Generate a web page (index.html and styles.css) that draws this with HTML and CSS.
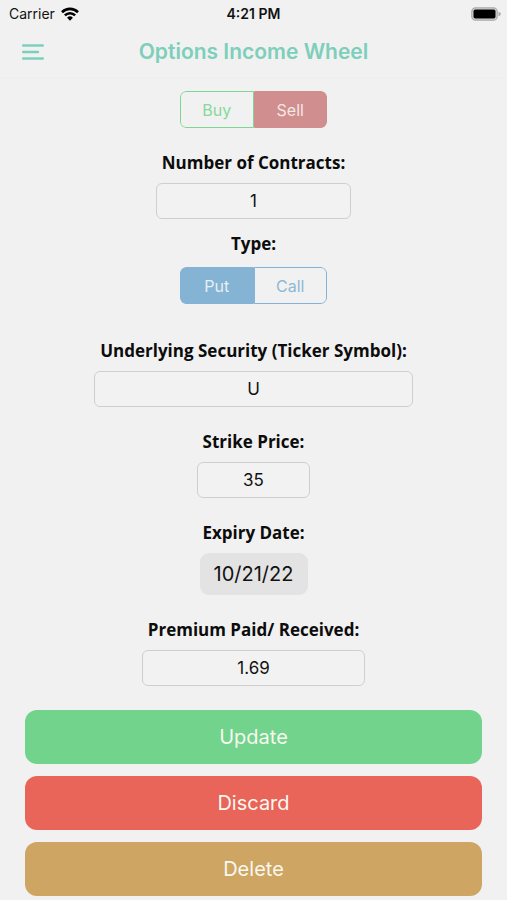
FILE: index.html
```html
<!DOCTYPE html>
<html lang="en">
<head>
<meta charset="utf-8">
<meta name="viewport" content="width=device-width, initial-scale=1">
<title>Options Income Wheel</title>
<link rel="stylesheet" href="styles.css">
</head>
<body>
<div class="status">
  <div class="carrier">
    <span>Carrier</span>
    <svg class="wifi" viewBox="0 0 18 14" aria-hidden="true">
      <g fill="none" stroke="#000" stroke-width="2.6">
        <path d="M1 5.2A11.4 11.4 0 0 1 17 5.2"/>
        <path d="M3.9 8.3A7.2 7.2 0 0 1 14.1 8.3"/>
      </g>
      <path d="M6.1 10.7A4.1 4.1 0 0 1 11.9 10.7L9 13.7Z"/>
    </svg>
  </div>
  <time class="clock">4:21 PM</time>
  <svg class="battery" viewBox="0 0 30 14" aria-hidden="true">
    <rect x=".8" y=".8" width="25.4" height="12.4" rx="3.8" fill="#d4d4d4" stroke="#aaa" stroke-width="1.2"/>
    <rect x="2.5" y="2.5" width="22" height="9" rx="1.8"/>
    <path d="M27.5 4.7Q30 5.4 30 7T27.5 9.3Z" fill="#aaa"/>
  </svg>
</div>
<header class="nav">
  <button class="menu" type="button" aria-label="Menu">
    <svg viewBox="0 0 22 16" aria-hidden="true">
      <path d="M1.2 1.5H20.8M1.2 8H16M1.2 14.5H20.8" fill="none" stroke="#7dcfbb" stroke-width="2.4" stroke-linecap="round"/>
    </svg>
  </button>
  <h1>Options Income Wheel</h1>
</header>
<form class="form">
  <div class="segment side">
    <button type="button" aria-pressed="false">Buy</button>
    <button type="button" aria-pressed="true">Sell</button>
  </div>
  <div class="field">
    <label for="contracts">Number of Contracts:</label>
    <input class="medium" id="contracts" type="text" value="1">
  </div>
  <div class="field type">
    <span class="caption" id="type">Type:</span>
    <div class="segment kind" role="group" aria-labelledby="type">
      <button type="button" aria-pressed="true">Put</button>
      <button type="button" aria-pressed="false">Call</button>
    </div>
  </div>
  <div class="field">
    <label for="ticker">Underlying Security (Ticker Symbol):</label>
    <input class="wide" id="ticker" type="text" value="U">
  </div>
  <div class="field">
    <label for="strike">Strike Price:</label>
    <input class="narrow" id="strike" type="text" value="35">
  </div>
  <div class="field">
    <label for="expiry">Expiry Date:</label>
    <button class="date" id="expiry" type="button">10/21/22</button>
  </div>
  <div class="field">
    <label for="premium">Premium Paid/ Received:</label>
    <input class="premium" id="premium" type="text" value="1.69">
  </div>
  <div class="actions">
    <button class="update" type="submit">Update</button>
    <button class="discard" type="button">Discard</button>
    <button class="delete" type="button">Delete</button>
  </div>
</form>
</body>
</html>
```
FILE: styles.css
```css
* {
  box-sizing: border-box;
}

body {
  margin: 0;
  background: #f1f1f1;
  color: #111;
  font-family: Inter, sans-serif;
}

button,
input {
  margin: 0;
  padding: 0;
  border: 0;
  font: inherit;
  color: inherit;
}

.status {
  display: grid;
  grid-template-columns: 1fr auto 1fr;
  align-items: center;
  height: 27px;
  padding: 0 6px;
  font-size: 14px;
}

.carrier {
  display: flex;
  align-items: center;
  gap: 6px;
  padding-left: 3px;
}

.wifi {
  width: 18px;
  height: 14px;
}

.clock {
  font-weight: 600;
}

.battery {
  justify-self: end;
  width: 30px;
  height: 14px;
}

.nav {
  display: grid;
  grid-template-columns: 44px 1fr 44px;
  align-items: center;
  height: 51px;
  padding: 0 11px;
  border-bottom: 1px solid #eee;
}

.menu {
  display: flex;
  align-items: center;
  justify-content: center;
  height: 44px;
  background: none;
}

.menu svg {
  width: 22px;
  height: 16px;
}

h1 {
  margin: 0;
  color: #7dcfbb;
  font-size: 21px;
  font-weight: 600;
  line-height: 28px;
  text-align: center;
}

.form {
  display: flex;
  flex-direction: column;
  align-items: center;
  gap: 23px;
  padding: 13px 25px 4px;
}

.segment {
  display: grid;
  grid-template-columns: 1fr 1fr;
  width: 147px;
  height: 37px;
  overflow: hidden;
  border-radius: 6px;
  font-size: 16px;
}

.segment button {
  border: 1px solid;
  background: none;
}

.segment button:first-child {
  border-radius: 6px 0 0 6px;
}

.segment button:last-child {
  border-radius: 0 6px 6px 0;
}

.side button {
  border-color: #7ed695;
  color: #86d99b;
}

.side button[aria-pressed="true"] {
  border-color: #d08e8e;
  background: #d08e8e;
  color: #f5e6e6;
}

.kind button {
  border-color: #85b3d8;
  color: #8fb8d8;
}

.kind button[aria-pressed="true"] {
  background: #85b3d3;
  color: #e6f0f6;
}

.field {
  display: flex;
  flex-direction: column;
  align-items: center;
  gap: 8px;
  width: 100%;
}

.type {
  gap: 11px;
  margin: -10px 0 12px;
}

label,
.caption {
  color: #0c0c0c;
  font-family: "Open Sans", sans-serif;
  font-size: 17px;
  font-weight: 700;
  line-height: 24px;
}

input {
  max-width: 100%;
  height: 36px;
  border: 1px solid #cfcfcf;
  border-radius: 6px;
  background: #f2f2f2;
  font-size: 17px;
  text-align: center;
}

.narrow {
  width: 113px;
}

.medium {
  width: 195px;
}

.premium {
  width: 223px;
}

.wide {
  width: 319px;
}

.date {
  width: 108px;
  height: 42px;
  border-radius: 9px;
  background: #e3e3e3;
  font-size: 20px;
}

.actions {
  display: flex;
  flex-direction: column;
  gap: 12px;
  width: 100%;
  padding-top: 1px;
}

.actions button {
  height: 54px;
  border-radius: 12px;
  color: #f8f8f0;
  font-size: 20px;
}

.actions .update {
  background: #71d38c;
}

.actions .discard {
  background: #e96459;
}

.actions .delete {
  background: #cea562;
}
```
